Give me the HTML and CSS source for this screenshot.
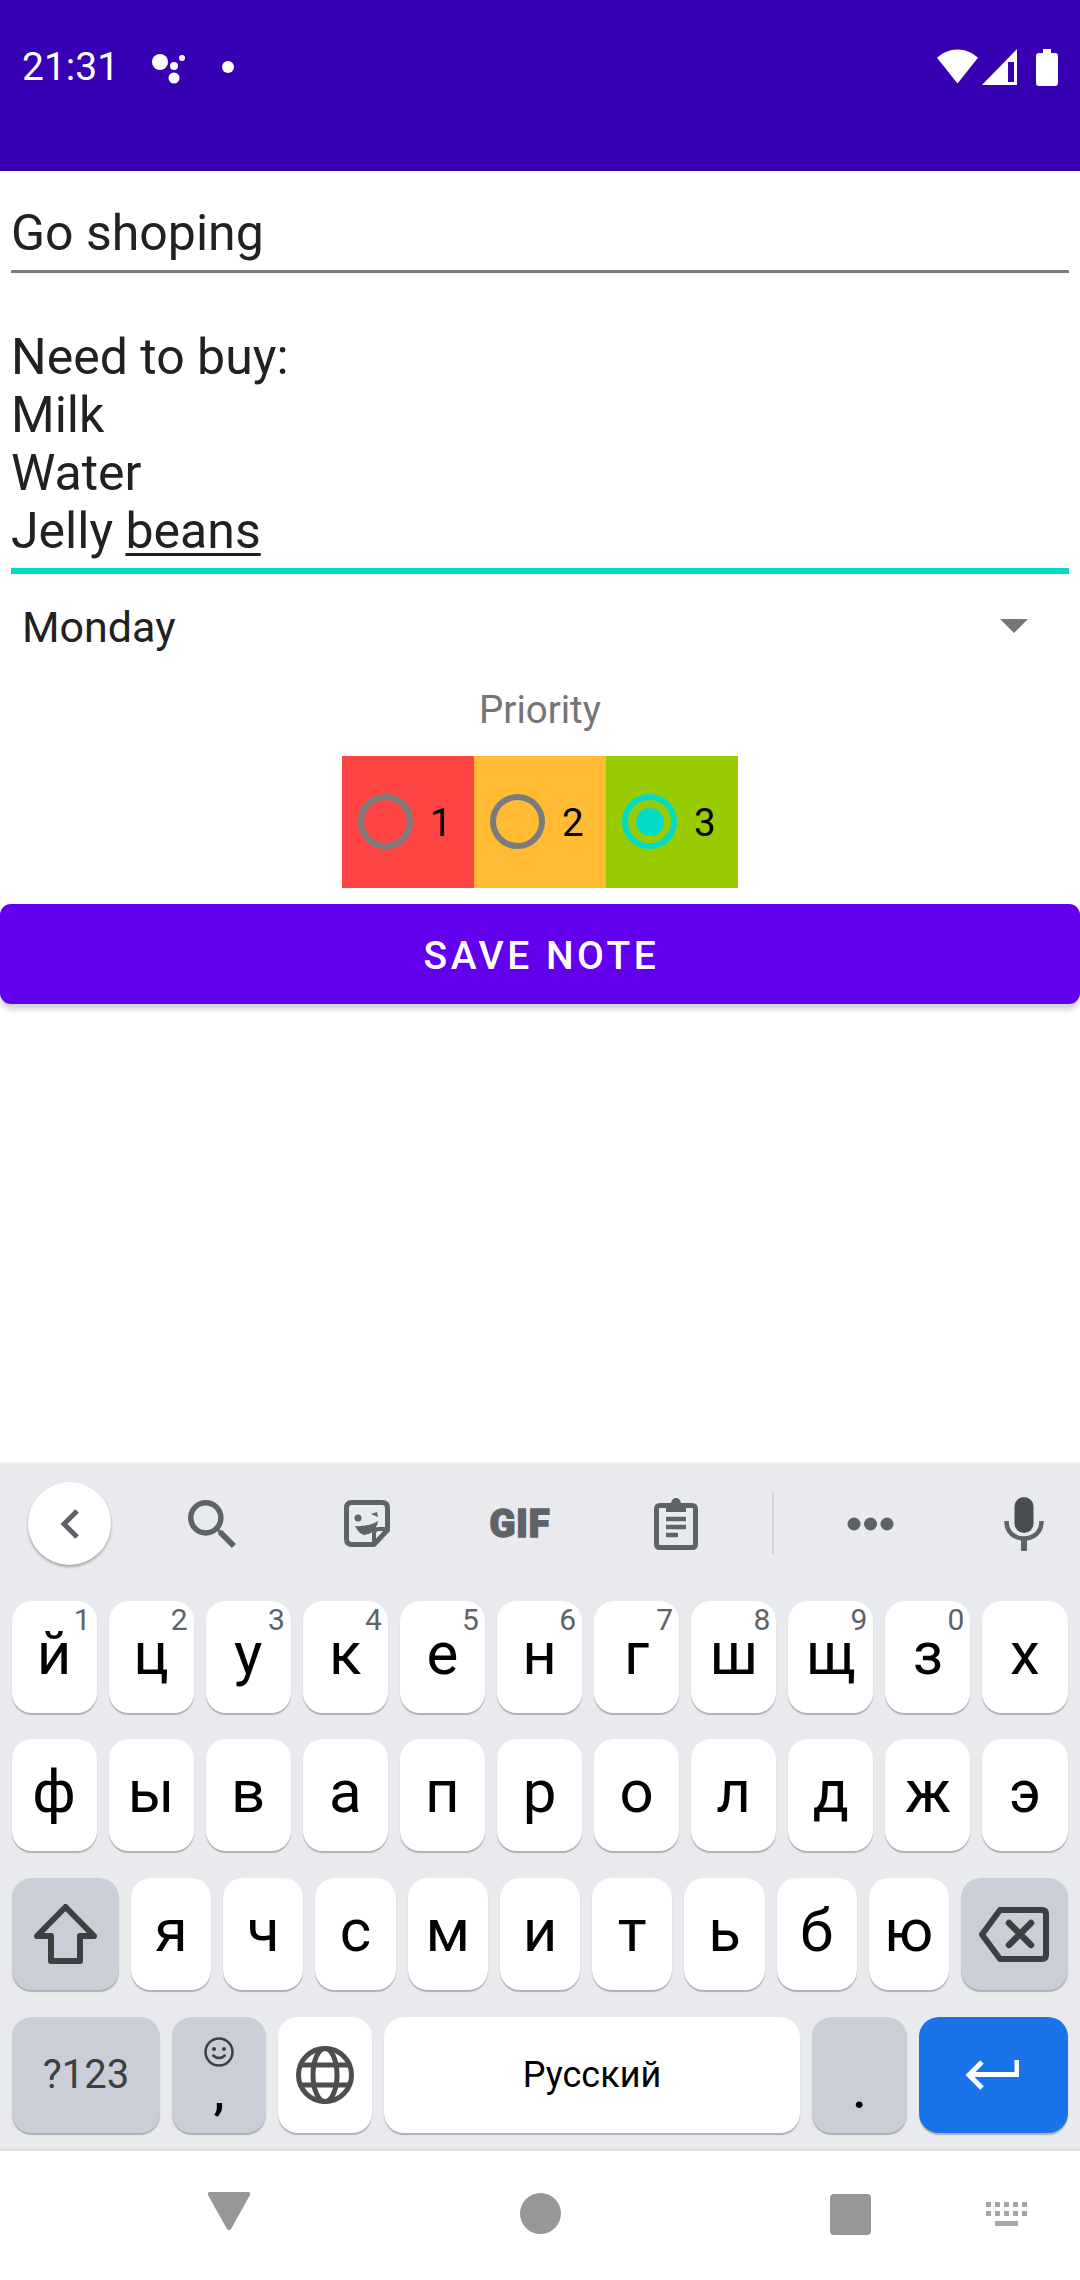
FILE: index.html
```html
<!DOCTYPE html>
<html lang="ru">

<head>
  <title>Go shoping</title>
  <meta charset="utf-8" />
  <meta name="viewport" content="width=device-width, initial-scale=1.0" />
  <link rel="stylesheet" href="styles.css">
</head>

<body>
  <header class="topbar">
    <div class="status">
      <span class="time">21:31</span>
      <svg class="assistant" width="36" height="32" viewBox="0 0 36 32"><circle cx="9" cy="9" r="8"/><circle cx="23" cy="13" r="4"/><circle cx="31" cy="5" r="3"/><circle cx="23" cy="25" r="5.5"/></svg>
      <span class="dot"></span>
      <span class="status-right">
        <svg width="41" height="36" viewBox="0 0 42 36"><path d="M21 0C13 0 6 3 0 8.500L21 35 42 8.500C36 3 29 0 21 0z"/></svg>
        <svg width="35" height="36" viewBox="0 0 35 36"><path fill-rule="evenodd" d="M35 0V36H0zM32 13H26V33H32z"/></svg>
        <svg width="22" height="37" viewBox="0 0 22 37"><path d="M7 0H15V4H19Q22 4 22 7V34Q22 37 19 37H3Q0 37 0 34V7Q0 4 3 4H7z"/></svg>
      </span>
    </div>
  </header>

  <main class="note">
    <div class="field-title">Go shoping</div>
    <div class="field-body">Need to buy:<br>Milk<br>Water<br>Jelly <span class="composing">beans</span></div>
    <div class="spinner">
      <span>Monday</span>
      <span class="arrow"></span>
    </div>
    <div class="priority-label">Priority</div>
    <div class="priority">
      <div class="radio red"><span class="ring"></span>1</div>
      <div class="radio orange"><span class="ring"></span>2</div>
      <div class="radio green"><span class="ring on"></span>3</div>
    </div>
    <button class="save">Save note</button>
  </main>

  <section class="keyboard">
    <div class="tools">
      <div class="tool t-back">
        <span class="back-btn">
          <svg width="20" height="32" viewBox="0 0 20 32"><path d="M17 3L4 16 17 29" fill="none" stroke="#5f6368" stroke-width="5"/></svg>
        </span>
      </div>
      <div class="tool t-search">
        <svg width="48" height="48" viewBox="3 3 17.500 17.500"><path fill="#5f6368" d="M15.500 14h-.79l-.28-.27A6.471 6.471 0 0 0 16 9.500 6.500 6.500 0 1 0 9.500 16c1.610 0 3.090-.59 4.230-1.570l.27.28v.79l5 4.990L20.490 19l-4.990-5zm-6 0C7.010 14 5 11.990 5 9.500S7.010 5 9.500 5 14 7.010 14 9.500 11.990 14 9.500 14z"/></svg>
      </div>
      <div class="tool t-sticker">
        <svg width="46" height="47" viewBox="0 0 46 47"><path d="M8 2.500H38Q43.500 2.500 43.500 8V30L30 44.500H8Q2.500 44.500 2.500 39V8Q2.500 2.500 8 2.500z" fill="none" stroke="#5f6368" stroke-width="5" stroke-linejoin="round"/><path d="M43 29H35Q30 29 30 34V44" fill="none" stroke="#5f6368" stroke-width="4"/><circle cx="14" cy="18" r="3.500" fill="#5f6368"/><path d="M27 14l6-2 1 5z" fill="#5f6368"/><path d="M11 26Q24 27 34 21 32 34 20 35 14 33 11 26z" fill="#5f6368"/></svg>
      </div>
      <div class="tool t-gif"><span class="gif">GIF</span></div>
      <div class="tool t-clip">
        <svg width="44" height="52" viewBox="0 0 44 52"><path d="M6 7.500H38Q41.500 7.500 41.500 11V46Q41.500 49.500 38 49.500H6Q2.500 49.500 2.500 46V11Q2.500 7.500 6 7.500z" fill="none" stroke="#5f6368" stroke-width="5"/><path d="M12 5H17Q18 0 22 0 26 0 27 5H32V14H12z" fill="#5f6368"/><path d="M12 21H32M12 29H32M12 37H24" stroke="#5f6368" stroke-width="4.500"/></svg>
      </div>
      <div class="tool t-div"><span class="divider"></span></div>
      <div class="tool t-more">
        <svg width="47" height="14" viewBox="0 0 47 14"><circle cx="7" cy="7" r="6.500"/><circle cx="23.500" cy="7" r="6.500"/><circle cx="40" cy="7" r="6.500"/></svg>
      </div>
      <div class="tool t-mic">
        <svg width="40" height="54" viewBox="0 0 40 54"><rect x="10.500" y="0" width="19" height="36" rx="9.500" fill="#4a4d52"/><path d="M2.500 24C2.500 36 11 41.500 20 41.500S37.500 36 37.500 24" fill="none" stroke="#5f6368" stroke-width="4.500"/><path d="M20 41V54" stroke="#5f6368" stroke-width="6"/></svg>
      </div>
    </div>

    <div class="row row-top">
      <div class="key">й<sup>1</sup></div>
      <div class="key">ц<sup>2</sup></div>
      <div class="key">у<sup>3</sup></div>
      <div class="key">к<sup>4</sup></div>
      <div class="key">е<sup>5</sup></div>
      <div class="key">н<sup>6</sup></div>
      <div class="key">г<sup>7</sup></div>
      <div class="key">ш<sup>8</sup></div>
      <div class="key">щ<sup>9</sup></div>
      <div class="key">з<sup>0</sup></div>
      <div class="key">х</div>
    </div>
    <div class="row row-mid">
      <div class="key">ф</div>
      <div class="key">ы</div>
      <div class="key">в</div>
      <div class="key">а</div>
      <div class="key">п</div>
      <div class="key">р</div>
      <div class="key">о</div>
      <div class="key">л</div>
      <div class="key">д</div>
      <div class="key">ж</div>
      <div class="key">э</div>
    </div>
    <div class="row">
      <div class="key fn w-shift">
        <svg width="63" height="60" viewBox="0 0 63 60"><path d="M31.500 3L60 32H46V57H17V32H3z" fill="none" stroke="#3c4043" stroke-width="6" stroke-linejoin="round"/></svg>
      </div>
      <div class="key">я</div>
      <div class="key">ч</div>
      <div class="key">с</div>
      <div class="key">м</div>
      <div class="key">и</div>
      <div class="key">т</div>
      <div class="key">ь</div>
      <div class="key">б</div>
      <div class="key">ю</div>
      <div class="key fn w-shift">
        <svg width="70" height="55" viewBox="0 0 70 55"><path d="M21 3H63Q67 3 67 7V48Q67 52 63 52H21L3 27.500z" fill="none" stroke="#3c4043" stroke-width="6" stroke-linejoin="round"/><path d="M30 16L52 38M52 16L30 38" stroke="#3c4043" stroke-width="6.500" stroke-linecap="round"/></svg>
      </div>
    </div>
    <div class="row row-last">
      <div class="key fn w-sym">?123</div>
      <div class="key fn w-small punct">
        <svg width="30" height="30" viewBox="0 0 30 30"><circle cx="15" cy="15" r="13.500" fill="none" stroke="#3c4043" stroke-width="2.500"/><circle cx="10" cy="12" r="2" fill="#3c4043"/><circle cx="20" cy="12" r="2" fill="#3c4043"/><path d="M8.500 18Q15 24 21.500 18" fill="none" stroke="#3c4043" stroke-width="2.500"/></svg>
        <span class="comma">,</span>
      </div>
      <div class="key w-small">
        <svg width="58" height="58" viewBox="0 0 58 58" fill="none" stroke="#4d4d4d" stroke-width="5"><circle cx="29" cy="29" r="26.500"/><ellipse cx="29" cy="29" rx="12" ry="26.500"/><path d="M4 19H54M4 39H54"/></svg>
      </div>
      <div class="key w-space">Русский</div>
      <div class="key fn w-period"><span class="period">.</span></div>
      <div class="key enter w-enter">
        <svg class="enter-icon" width="54" height="32" viewBox="0 0 54 32"><path d="M52 1V15.500H5M17 3L4 16 17 29" fill="none" stroke="#fff" stroke-width="5"/></svg>
      </div>
    </div>
  </section>

  <nav class="navbar">
    <div class="nav-item nav-back"><svg width="44" height="40" viewBox="0 0 44 40"><path d="M3 1H41Q44 1 43 4L24 38Q22 40 20 38L1 4Q0 1 3 1z" fill="#979797"/></svg></div>
    <div class="nav-item nav-home"><span class="nav-circle"></span></div>
    <div class="nav-item nav-recent"><span class="nav-square"></span></div>
    <div class="nav-item nav-kb">
      <svg width="42" height="24" viewBox="0 0 42 24" fill="#a6a6a6"><path d="M0 0h5v5H0zM9 0h5v5H9zM18 0h5v5h-5zM27 0h5v5h-5zM36 0h5v5h-5zM0 9h5v5H0zM9 9h5v5H9zM18 9h5v5h-5zM27 9h5v5h-5zM36 9h5v5h-5zM9 19h23v5H9z"/></svg>
    </div>
  </nav>
</body>

</html>
```

FILE: styles.css
```css
* {
  box-sizing: border-box;
}
html,
body {
  margin: 0;
  padding: 0;
  height: 2280px;
}
body {
  font-family: 'Roboto', sans-serif;
  background: #fff;
  color: #212121;
  display: flex;
  flex-direction: column;
  overflow: hidden;
}

/* status + action bar */
.topbar {
  height: 171px;
  flex: none;
  background: #3700b3;
  color: #fff;
}
.status {
  display: flex;
  align-items: center;
  height: 40px;
  margin-top: 47px;
  padding: 0 22px;
  fill: #fff;
}
.time {
  font-size: 39px;
  line-height: 40px;
  width: 129px;
}
.assistant {
  margin-top: 4px;
}
.dot {
  width: 12px;
  height: 12px;
  margin: 0 0 0 35px;
  border-radius: 50%;
  background: #fff;
}
.status-right {
  margin-left: auto;
  display: flex;
  align-items: center;
  gap: 4px;
}
.status-right svg:last-child {
  margin-left: 15px;
}

/* note form */
.note {
  flex: 1;
}
.field-title {
  margin: 20px 11px 0;
  height: 82px;
  font-size: 50px;
  line-height: 58px;
  padding-top: 13px;
  border-bottom: 3px solid #7d7d7d;
}
.field-body {
  margin: 0 11px;
  padding-top: 55px;
  font-size: 50px;
  line-height: 58px;
  height: 301px;
  border-bottom: 6px solid #03dac5;
}
.composing {
  text-decoration: underline;
  text-decoration-thickness: 3px;
  text-underline-offset: 5px;
}
.spinner {
  display: flex;
  align-items: center;
  justify-content: space-between;
  height: 100px;
  padding: 6px 52px 0 22px;
  font-size: 43px;
}
.arrow {
  width: 0;
  height: 0;
  border-left: 14px solid transparent;
  border-right: 14px solid transparent;
  border-top: 14px solid #757575;
  margin-top: -2px;
}
.priority-label {
  text-align: center;
  font-size: 38.500px;
  line-height: 45px;
  color: #757575;
  height: 82px;
  padding-top: 13px;
}
.priority {
  display: flex;
  justify-content: center;
}
.radio {
  display: flex;
  align-items: center;
  width: 132px;
  height: 132px;
  padding-left: 16px;
  gap: 17px;
  font-size: 38.500px;
  color: #000;
}
.red {
  background: #ff4444;
}
.orange {
  background: #ffbb33;
}
.green {
  background: #99cc00;
}
.ring {
  width: 55px;
  height: 55px;
  flex: none;
  border: 6px solid #7b7b7b;
  border-radius: 50%;
  display: flex;
  align-items: center;
  justify-content: center;
  margin-top: -1px;
}
.ring.on {
  border-color: #03dac5;
}
.ring.on::before {
  content: "";
  width: 28px;
  height: 28px;
  border-radius: 50%;
  background: #03dac5;
}
.save {
  display: block;
  width: 100%;
  height: 100px;
  margin-top: 16px;
  padding: 3px 0 0 3px;
  border: 0;
  border-radius: 11px;
  background: #6200ee;
  color: #fff;
  font-family: inherit;
  font-size: 39px;
  font-weight: 500;
  letter-spacing: 0.09em;
  text-transform: uppercase;
  box-shadow: 0 5px 6px rgba(0, 0, 0, 0.2);
}

/* keyboard */
.keyboard {
  flex: none;
  height: 688px;
  background: #e8eaed;
  border-top: 1px solid #eceef0;
  border-bottom: 3px solid #e0e0e0;
  box-shadow: 0 -1px 3px rgba(0, 0, 0, 0.06);
}
.tools {
  display: flex;
  align-items: center;
  height: 119px;
  fill: #5f6368;
}
.tool {
  display: flex;
  align-items: center;
  justify-content: center;
  height: 100%;
}
.t-back {
  width: 139px;
}
.t-search {
  width: 146px;
}
.t-sticker {
  width: 164px;
}
.t-gif {
  width: 142px;
}
.t-clip {
  width: 170px;
}
.t-div {
  width: 24px;
}
.t-more {
  width: 170px;
}
.t-mic {
  width: 112px;
  margin-left: 13px;
}
.back-btn {
  width: 83px;
  height: 83px;
  border-radius: 50%;
  background: #fff;
  box-shadow: 0 2px 3px rgba(0, 0, 0, 0.3);
  display: flex;
  align-items: center;
  justify-content: center;
}
.gif {
  font-size: 38px;
  font-weight: 900;
  color: #5f6368;
  letter-spacing: 1px;
  -webkit-text-stroke: 1.5px #5f6368;
}
.divider {
  width: 2px;
  height: 61px;
  background: #d0d2d6;
}
.row {
  display: flex;
  gap: 12px;
  padding: 0 12px;
  margin-top: 27px;
  height: 112px;
}
.row-top {
  margin-top: 18px;
  padding: 0 12.500px 0 11.500px;
}
.row-mid {
  margin-top: 26px;
  padding: 0 12.500px 0 11.500px;
}
.row-last {
  height: 116px;
}
.key {
  position: relative;
  flex: 1 1 0;
  display: flex;
  align-items: center;
  justify-content: center;
  padding-bottom: 6px;
  background: #fff;
  border-radius: 20px;
  box-shadow: 0 2px 1px #aeb0b5;
  color: #000;
  font-size: 60px;
  line-height: 50px;
}
.key sup {
  position: absolute;
  top: 4px;
  right: 6px;
  font-size: 30px;
  line-height: 30px;
  color: #5f6368;
}
.key svg {
  margin-top: 6px;
}
.fn {
  background: #cbced6;
}
.enter {
  background: #1a73e8;
}
.enter-icon {
  margin-right: 4px;
}
.w-shift {
  flex: 0 0 107px;
}
.w-sym {
  flex: 0 0 148px;
  padding-bottom: 0;
  font-size: 40px;
  color: #3c4043;
}
.w-small {
  flex: 0 0 94px;
}
.w-space {
  flex: 0 0 416px;
  padding-bottom: 0;
  font-size: 36px;
}
.w-period {
  flex: 0 0 95px;
}
.w-enter {
  flex: 0 0 149px;
}
.punct {
  flex-direction: column;
  justify-content: flex-start;
  padding: 20px 0 0;
}
.punct svg {
  margin-top: 0;
}
.comma {
  font-size: 50px;
  line-height: 50px;
  font-weight: 500;
}
.period {
  font-size: 50px;
  margin-top: 38px;
  font-weight: 500;
}

/* nav bar */
.navbar {
  flex: none;
  display: flex;
  height: 129px;
  background: #fff;
}
.nav-item {
  display: flex;
}
.nav-back {
  width: 458px;
  justify-content: flex-end;
  padding: 40px 207px 0 0;
}
.nav-home {
  width: 164px;
  justify-content: center;
  padding-top: 42px;
}
.nav-recent {
  width: 249px;
  justify-content: flex-end;
  padding-top: 43px;
}
.nav-kb {
  width: 209px;
  padding: 51px 0 0 115px;
}
.nav-circle {
  width: 41px;
  height: 41px;
  border-radius: 50%;
  background: #979797;
}
.nav-square {
  width: 41px;
  height: 41px;
  border-radius: 4px;
  background: #979797;
}
```
